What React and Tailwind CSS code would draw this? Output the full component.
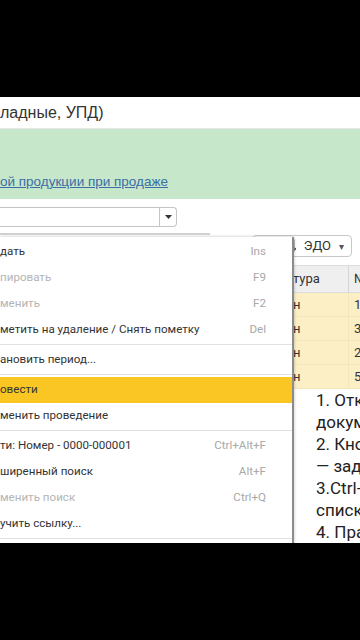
import React from "react";

const F = { fontFamily: '"Liberation Sans", Arial, sans-serif' };
const R = { fontFamily: 'Roboto, "Liberation Sans", Arial, sans-serif' };

function Item({ text, sc, disabled, active }) {
  return (
    <div
      className={`flex items-center justify-between h-[26px] pr-[26px] text-[11.6px] ${active ? "bg-[#f9c623]" : ""}`}
      style={R}
    >
      <span className={`whitespace-nowrap ${disabled ? "text-[#b4b4b4]" : "text-[#333333]"}`}>{text}</span>
      {sc ? <span className="text-[#a8a8a8] whitespace-nowrap">{sc}</span> : null}
    </div>
  );
}

function Sep() {
  return <div className="h-px mt-px mb-[2px] bg-[#e2e2e2]" />;
}

export default function App() {
  return (
    <div className="w-[360px] h-[640px] bg-black overflow-hidden" style={F}>
      <div className="h-[97px]" />
      <div className="relative h-[446px] bg-white overflow-hidden">
        <div className="h-[32px] flex items-center pt-[1px] text-[16px] text-[#333333] border-b border-[#e6e6e6] whitespace-nowrap">
          ладные, УПД)
        </div>
        <div className="h-[70px] bg-[#c6e7c9] pt-[40px]">
          <span className="text-[13.5px] text-[#3a6ea5] underline whitespace-nowrap">ой продукции при продаже</span>
        </div>
        <div className="h-[8px]" />
        <div className="flex w-[177px] h-[20px] border border-[#c4c4c4] border-l-0 rounded-r-sm bg-white">
          <div className="flex-1" />
          <div className="w-[17px] border-l border-[#c4c4c4] flex items-center justify-center">
            <svg width="7" height="4" viewBox="0 0 7 4"><path d="M0 0H7L3.5 4Z" fill="#333" /></svg>
          </div>
        </div>
        <div className="h-[6px]" />
        <div className="h-[2px] w-[210px] bg-[#d2d2d2]" />
        <div className="flex justify-end pr-[8px] h-[22px]">
          <div className="flex items-center h-[22px] w-[100px] border border-[#c8c8c8] rounded-sm bg-white">
            <div className="flex-1" />
            <svg width="12" height="14" viewBox="0 0 12 14" className="mr-[7px]">
              <rect x="1" y="1" width="8" height="11" fill="none" stroke="#777" strokeWidth="1" />
              <path d="M3 4H7M3 6H7M3 8H7" stroke="#777" strokeWidth="1" />
              <path d="M7 10H11M9.5 8.5L11 10L9.5 11.5" stroke="#555" strokeWidth="1" fill="none" />
            </svg>
            <span className="text-[13px] text-[#333333]" style={R}>ЭДО</span>
            <span className="text-[10px] text-[#555] ml-[8px] mr-[7px]">▾</span>
          </div>
        </div>
        <div className="h-[8px]" />
        <div className="grid grid-cols-[292px_56px_1fr] h-[28px] bg-[#efefef] border-y border-[#dcdcdc] text-[13px] text-[#333333]" style={R}>
          <div />
          <div className="flex items-center pl-px whitespace-nowrap overflow-hidden">тура</div>
          <div className="flex items-center pl-[5px] border-l border-[#d4d4d4] whitespace-nowrap overflow-hidden">№</div>
        </div>
        {["1", "3", "2", "5"].map((n) => (
          <div key={n} className="grid grid-cols-[292px_56px_1fr] h-[24px] bg-[#fcefc6] border-b border-[#f4e6bb] text-[13px] text-[#333333]" style={R}>
            <div />
            <div className="flex items-center pl-px">н</div>
            <div className="flex items-center pl-[5px] border-l border-[#f4e6bb] whitespace-nowrap overflow-hidden">{n}</div>
          </div>
        ))}
        <div
          className="pl-[316px] text-[17px] leading-[22px] text-[#222222] whitespace-nowrap"
          style={R}
        >
          <div>1. Открыть</div>
          <div>документ</div>
          <div>2. Кнопка</div>
          <div>— задать</div>
          <div>3.Ctrl+F</div>
          <div>списком</div>
          <div>4. Правой</div>
        </div>

        <div className="absolute left-0 top-[140px] w-[294px] h-[320px] bg-white border-r-2 border-[#8c8c8c] shadow-[0_0_3px_rgba(0,0,0,0.25)] pt-[2px]">
          <Item text="дать" sc="Ins" />
          <Item text="пировать" sc="F9" disabled />
          <Item text="менить" sc="F2" disabled />
          <Item text="метить на удаление / Снять пометку" sc="Del" />
          <Sep />
          <Item text="ановить период..." />
          <Sep />
          <Item text="овести" active />
          <Item text="менить проведение" />
          <Sep />
          <Item text="ти: Номер - 0000-000001" sc="Ctrl+Alt+F" />
          <Item text="ширенный поиск" sc="Alt+F" />
          <Item text="менить поиск" sc="Ctrl+Q" disabled />
          <Item text="учить ссылку..." />
          <Sep />
        </div>
      </div>
    </div>
  );
}
